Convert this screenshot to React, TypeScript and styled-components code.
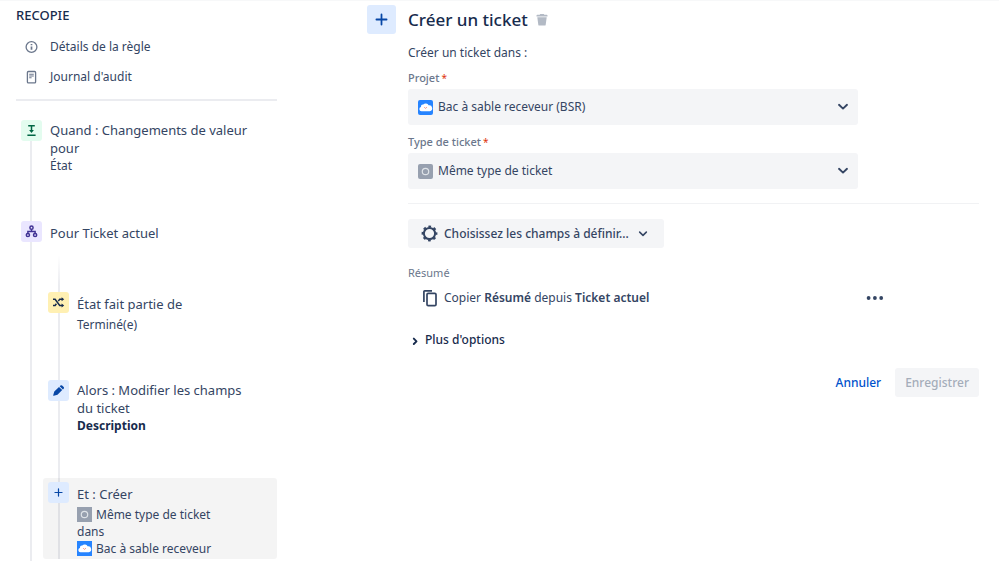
import React from "react";
import styled, { createGlobalStyle } from "styled-components";

const Global = createGlobalStyle`
  *, *::before, *::after { box-sizing: border-box; }
  body {
    margin: 0;
    background: #fff;
    color: #344563;
    font-family: "Noto Sans", "Open Sans", sans-serif;
    font-size: 12px;
    line-height: 18px;
  }
  h1, h2, h3, p, ul, ol { margin: 0; padding: 0; font-weight: 400; }
  ul, ol { list-style: none; }
  button, select { font: inherit; color: inherit; border: 0; background: none; padding: 0; margin: 0; }
  button:not(:disabled), select { cursor: pointer; }
  svg { display: block; flex: none; }
`;

const Page = styled.div`
  display: grid;
  grid-template-columns: 261px minmax(0, 1fr);
  column-gap: 90px;
  height: 100vh;
  overflow: hidden;
  padding: 0 20px 0 16px;
  border-top: 1px solid #f7f8f9;
`;

const Sidebar = styled.aside`
  display: flex;
  flex-direction: column;
  min-height: 0;
  padding-top: 5px;
`;

const RuleName = styled.h2`
  color: #172b4d;
  font-size: 13px;
  font-weight: 500;
  margin-bottom: 8px;
`;

const RuleNav = styled.nav`
  display: flex;
  flex-direction: column;
  padding-bottom: 7px;
  border-bottom: 2px solid #ebecf0;
`;

const NavLink = styled.a`
  display: flex;
  align-items: center;
  gap: 11px;
  height: 30px;
  padding-left: 8px;
  color: #344563;
  text-decoration: none;
  svg { color: #6b778c; }
`;

const Chain = styled.ol`
  flex: 1 0 auto;
  margin-top: 19px;
  background: linear-gradient(#ebecf0, #ebecf0) 14px 0 / 2px 100% no-repeat;
`;

const Branch = styled.ol`
  margin: 10px 0 0 27px;
  padding-top: 37px;
  background: linear-gradient(to bottom, #fff, #ebecf0 30px) 15px 0 / 2px 100% no-repeat;
`;

const Step = styled.li<{ $space?: number; $selected?: boolean }>`
  display: grid;
  grid-template-columns: 21px minmax(0, 1fr);
  column-gap: 8px;
  align-items: start;
  padding: ${(p) => (p.$selected ? "4px 24px 2px 5px" : "0 24px 0 5px")};
  margin-bottom: ${(p) => p.$space ?? 0}px;
  border-radius: 3px;
  background: ${(p) => (p.$selected ? "rgba(0, 0, 0, 0.043)" : "none")};
`;

const tones = {
  green: ["#e3fcef", "#006644"],
  purple: ["#eae6ff", "#403294"],
  yellow: ["#fff0b3", "#172b4d"],
  blue: ["#deebff", "#0747a6"],
};

const Badge = styled.span<{ $tone: keyof typeof tones; $size?: number }>`
  display: flex;
  align-items: center;
  justify-content: center;
  flex: none;
  width: ${(p) => p.$size ?? 21}px;
  height: ${(p) => p.$size ?? 21}px;
  border-radius: 3px;
  background: ${(p) => tones[p.$tone][0]};
  color: ${(p) => tones[p.$tone][1]};
`;

const StepTitle = styled.h3`
  font-size: 13px;
  line-height: 18px;
`;

const StepText = styled.div<{ $tight?: boolean }>`
  padding-top: ${(p) => (p.$tight ? 1 : 3)}px;
  line-height: 17px;
  strong { color: #172b4d; }
  ${StepTitle} { margin-bottom: ${(p) => (p.$tight ? 0 : 3)}px; }
`;

const Inline = styled.span`
  display: flex;
  align-items: center;
  gap: 4px;
`;

const Main = styled.main`
  display: grid;
  grid-template-columns: 29px minmax(0, 1fr);
  column-gap: 12px;
  align-content: start;
  padding-top: 4px;
`;

const Header = styled.header`
  display: flex;
  align-items: center;
  gap: 8px;
  height: 29px;
`;

const Title = styled.h1`
  color: #172b4d;
  font-size: 17px;
  font-weight: 500;
  line-height: 24px;
`;

const IconButton = styled.button<{ $color: string }>`
  display: flex;
  color: ${(p) => p.$color};
`;

const Form = styled.form`
  grid-column: 2;
  display: flex;
  flex-direction: column;
  padding-top: 10px;
`;

const Intro = styled.p`
  margin-bottom: 9px;
`;

const Field = styled.div`
  display: flex;
  flex-direction: column;
  max-width: 450px;
  margin-bottom: 10px;
`;

const Label = styled.label`
  color: #6b778c;
  font-size: 11px;
  font-weight: 500;
  line-height: 14px;
  margin-bottom: 4px;
`;

const Star = styled.span`
  color: #de350b;
  font-size: 10px;
  font-weight: 400;
  line-height: 10px;
  padding-left: 2px;
`;

const SelectBox = styled.div`
  display: grid;
  grid-template-columns: 15px minmax(0, 1fr);
  align-items: center;
  column-gap: 5px;
  height: 36px;
  padding: 0 9px 0 10px;
  border-radius: 3px;
  background: #f4f5f7;
  > * { grid-row: 1; }
  > svg:last-child { grid-column: 2; justify-self: end; pointer-events: none; }
`;

const Select = styled.select`
  appearance: none;
  grid-column: 2;
  width: 100%;
  height: 36px;
  outline: none;
`;

const Divider = styled.hr`
  width: 100%;
  margin: 4px 0 15px;
  border: 0;
  border-top: 1px solid #f1f2f4;
`;

const FieldsButton = styled.button`
  display: flex;
  align-items: center;
  align-self: flex-start;
  gap: 6px;
  height: 29px;
  padding: 0 16px 0 13px;
  border-radius: 3px;
  background: #f4f5f7;
  font-weight: 500;
  svg:last-child { margin-left: 3px; }
`;

const SectionLabel = styled.h3`
  color: #6b778c;
  font-size: 11px;
  line-height: 14px;
  margin-top: 18px;
`;

const CopyRow = styled.div`
  display: flex;
  align-items: center;
  gap: 5px;
  max-width: 476px;
  height: 36px;
  padding-left: 14px;
  strong { font-weight: 600; }
`;

const Grow = styled.p`
  flex: 1;
`;

const MoreOptions = styled.button`
  display: flex;
  align-items: center;
  align-self: flex-start;
  gap: 5px;
  height: 24px;
  margin-top: 12px;
  padding-left: 3px;
  color: #172b4d;
  font-weight: 500;
`;

const Actions = styled.footer`
  display: flex;
  justify-content: flex-end;
  gap: 4px;
  margin-top: 16px;
`;

const Action = styled.button`
  height: 29px;
  padding: 0 10px;
  border-radius: 3px;
  color: #0052cc;
  font-weight: 500;
  &:disabled { background: #f4f5f7; color: #a5adba; }
`;

const stroke = { fill: "none", stroke: "currentColor", strokeWidth: 1.5 } as const;

const InfoIcon = () => (
  <svg width="15" height="15" viewBox="0 0 15 15" {...stroke}>
    <circle cx="7.5" cy="7" r="5.4" strokeWidth="1.3" />
    <path d="M7.5 6.4v3.4M7.5 3.9v1.4" strokeWidth="1.7" />
  </svg>
);
const AuditIcon = () => (
  <svg width="15" height="15" viewBox="0 0 15 15" {...stroke} strokeWidth="1.3">
    <rect x="3.4" y="1.5" width="8.2" height="11.4" rx="1" />
    <path d="M5.2 4.2h4.6M5.2 6h4.6M5.2 7.8h2.4" strokeWidth="1.1" />
  </svg>
);
const TriggerIcon = () => (
  <svg width="13" height="13" viewBox="0 0 13 13" {...stroke}>
    <path d="M3.2 1.8h6.6M2.4 11.3h8.2M6.5 2v5" />
    <path d="M4.1 6h4.8L6.5 9z" fill="currentColor" stroke="none" />
  </svg>
);
const BranchIcon = () => (
  <svg width="13" height="13" viewBox="0 0 13 13" {...stroke} strokeWidth="1.5">
    <circle cx="6.5" cy="2.7" r="1.6" />
    <circle cx="2.9" cy="10" r="1.6" />
    <circle cx="10.1" cy="10" r="1.6" />
    <path d="M6.5 4.3v2M2.9 8.6V6.4h7.2v2.2" />
  </svg>
);
const ConditionIcon = () => (
  <svg width="13" height="13" viewBox="0 0 13 13" {...stroke} strokeWidth="1.5">
    <path d="M1 3.3h2.1l4.6 6.2h2.6M1 9.5h2.1l1.3-1.7M6.3 5.1l1.4-1.8h2.6" />
    <path d="M9.6 1.3l2.6 2-2.6 2zM9.6 7.5l2.6 2-2.6 2z" fill="currentColor" stroke="none" />
  </svg>
);
const PencilIcon = () => (
  <svg width="13" height="13" viewBox="0 0 13 13" fill="currentColor">
    <path d="M2.3 7.6 7 2.9l3.2 3.2-4.7 4.7-3.7 1c-.4.1-.7-.2-.6-.6zM7.7 2.3l.8-.8a1.2 1.2 0 0 1 1.6 0l1.6 1.6a1.2 1.2 0 0 1 0 1.6l-.8.8z" />
  </svg>
);
const PlusIcon = ({ size }: { size: number }) => (
  <svg width={size} height={size} viewBox="0 0 11 11" {...stroke} strokeLinecap="round">
    <path d="M5.5 1.2v8.6M1.2 5.5h8.6" />
  </svg>
);
const TrashIcon = () => (
  <svg width="12" height="12" viewBox="0 0 12 12" fill="currentColor">
    <path d="M4.2 0h3.6l.5.8h2.4c.5 0 .8.3.8.7v1H.5v-1c0-.4.3-.7.8-.7h2.4zM1.3 3.2h9.4l-1 7.5c0 .5-.4.9-.9.9H3.2c-.5 0-.9-.4-.9-.9z" />
  </svg>
);
const ProjectIcon = ({ round = 0 }: { round?: number }) => (
  <svg width="15" height="15" viewBox="0 0 15 15">
    <rect width="15" height="15" rx={round} fill="#2684ff" />
    <path d="M3.4 11.2a2.2 2.2 0 0 1-.5-4.3 2.2 2.2 0 0 1 2.4-2.3 3.1 3.1 0 0 1 5.3.7 3 3 0 0 1 1.2 5.9z" fill="#fff" />
    <path d="M6.3 7.2l1.2 1.2 1.3-1.2" fill="none" stroke="#ef8b80" />
  </svg>
);
const TypeIcon = ({ round = 0 }: { round?: number }) => (
  <svg width="15" height="15" viewBox="0 0 15 15">
    <rect width="15" height="15" rx={round} fill="#97a0af" />
    <circle cx="7.5" cy="7.5" r="3.2" fill="none" stroke="#dfe3e8" strokeWidth="1.2" />
  </svg>
);
const Chevron = ({ size = 12 }: { size?: number }) => (
  <svg width={size} height={size} viewBox="0 0 12 12" {...stroke} strokeWidth="1.9" strokeLinecap="round" strokeLinejoin="round">
    <path d="M2 3.8l4 3.8 4-3.8" />
  </svg>
);
const ChevronRight = () => (
  <svg width="9" height="12" viewBox="0 0 9 12" {...stroke} strokeWidth="1.9" strokeLinecap="round" strokeLinejoin="round">
    <path d="M2.8 4.6l2.7 2.7-2.7 2.7" />
  </svg>
);
const GearIcon = () => (
  <svg width="17" height="17" viewBox="0 0 17 17" {...stroke}>
    <circle cx="8.5" cy="8.5" r="5.6" strokeWidth="2" />
    <circle cx="8.5" cy="8.5" r="6.9" strokeWidth="2" strokeDasharray="2.7 2.72" strokeDashoffset="1.35" />
  </svg>
);
const CopyIcon = () => (
  <svg width="17" height="17" viewBox="0 0 17 17" {...stroke} strokeWidth="1.7">
    <rect x="5" y="3.4" width="9" height="12.2" rx="1.2" />
    <path d="M1.9 12V1.7C1.9 1.2 2.2.9 2.7.9H10" />
  </svg>
);
const DotsIcon = () => (
  <svg width="18" height="6" viewBox="0 0 18 6" fill="currentColor">
    <circle cx="2.6" cy="3" r="1.9" />
    <circle cx="8.9" cy="3" r="1.9" />
    <circle cx="15.2" cy="3" r="1.9" />
  </svg>
);

export default function App() {
  return (
    <>
      <Global />
      <Page>
        <Sidebar>
          <RuleName>RECOPIE</RuleName>
          <RuleNav>
            <NavLink href="#details"><InfoIcon />Détails de la règle</NavLink>
            <NavLink href="#audit"><AuditIcon />Journal d'audit</NavLink>
          </RuleNav>
          <Chain>
            <Step $space={47}>
              <Badge $tone="green"><TriggerIcon /></Badge>
              <StepText $tight>
                <StepTitle>Quand : Changements de valeur pour</StepTitle>
                État
              </StepText>
            </Step>
            <Step>
              <Badge $tone="purple"><BranchIcon /></Badge>
              <StepText><StepTitle>Pour Ticket actuel</StepTitle></StepText>
            </Step>
            <li>
              <Branch>
                <Step $space={47}>
                  <Badge $tone="yellow"><ConditionIcon /></Badge>
                  <StepText>
                    <StepTitle>État fait partie de</StepTitle>
                    Terminé(e)
                  </StepText>
                </Step>
                <Step $space={44}>
                  <Badge $tone="blue"><PencilIcon /></Badge>
                  <StepText $tight>
                    <StepTitle>Alors : Modifier les champs du ticket</StepTitle>
                    <strong>Description</strong>
                  </StepText>
                </Step>
                <Step $selected>
                  <Badge $tone="blue"><PlusIcon size={9} /></Badge>
                  <StepText>
                    <StepTitle>Et : Créer</StepTitle>
                    <Inline><TypeIcon />Même type de ticket</Inline>
                    dans
                    <Inline><ProjectIcon />Bac à sable receveur</Inline>
                  </StepText>
                </Step>
              </Branch>
            </li>
          </Chain>
        </Sidebar>
        <Main>
          <Badge $tone="blue" $size={29}><PlusIcon size={13} /></Badge>
          <Header>
            <Title>Créer un ticket</Title>
            <IconButton type="button" $color="#b3bac5" aria-label="Supprimer"><TrashIcon /></IconButton>
          </Header>
          <Form>
            <Intro>Créer un ticket dans :</Intro>
            <Field>
              <Label htmlFor="project">Projet<Star>*</Star></Label>
              <SelectBox>
                <ProjectIcon round={2} />
                <Select id="project"><option>Bac à sable receveur (BSR)</option></Select>
                <Chevron />
              </SelectBox>
            </Field>
            <Field>
              <Label htmlFor="type">Type de ticket<Star>*</Star></Label>
              <SelectBox>
                <TypeIcon round={2} />
                <Select id="type"><option>Même type de ticket</option></Select>
                <Chevron />
              </SelectBox>
            </Field>
            <Divider />
            <FieldsButton type="button">
              <GearIcon />Choisissez les champs à définir...<Chevron size={10} />
            </FieldsButton>
            <SectionLabel>Résumé</SectionLabel>
            <CopyRow>
              <CopyIcon />
              <Grow>Copier <strong>Résumé</strong> depuis <strong>Ticket actuel</strong></Grow>
              <IconButton type="button" $color="#344563" aria-label="Plus d'actions"><DotsIcon /></IconButton>
            </CopyRow>
            <MoreOptions type="button"><ChevronRight />Plus d'options</MoreOptions>
            <Actions>
              <Action type="button">Annuler</Action>
              <Action type="submit" disabled>Enregistrer</Action>
            </Actions>
          </Form>
        </Main>
      </Page>
    </>
  );
}
